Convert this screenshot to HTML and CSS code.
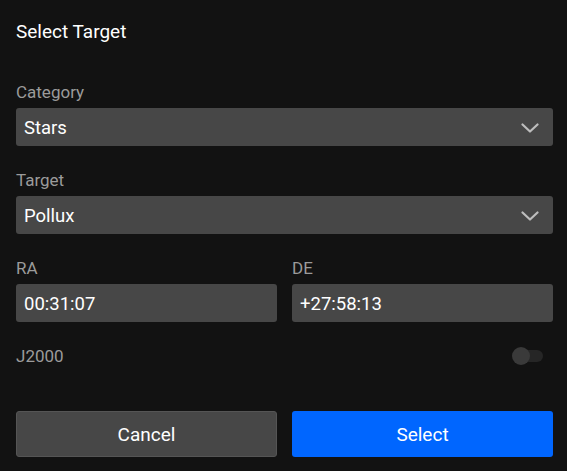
FILE: index.html
```html
<!DOCTYPE html>
<html>
<head>
<meta charset="utf-8">
<link rel="stylesheet" href="styles.css">
</head>
<body>
<div class="dialog">
  <div class="title">Select Target</div>
  <div class="field">
    <div class="label">Category</div>
    <div class="select"><span>Stars</span>
      <svg class="chev" width="18" height="10" viewBox="0 0 18 10"><path d="M1.5 1.5 L9 8.5 L16.5 1.5" fill="none" stroke="#bdbdbd" stroke-width="2.2" stroke-linecap="round" stroke-linejoin="round"/></svg>
    </div>
  </div>
  <div class="field">
    <div class="label">Target</div>
    <div class="select"><span>Pollux</span>
      <svg class="chev" width="18" height="10" viewBox="0 0 18 10"><path d="M1.5 1.5 L9 8.5 L16.5 1.5" fill="none" stroke="#bdbdbd" stroke-width="2.2" stroke-linecap="round" stroke-linejoin="round"/></svg>
    </div>
  </div>
  <div class="row2">
    <div class="field">
      <div class="label">RA</div>
      <div class="input">00:31:07</div>
    </div>
    <div class="field">
      <div class="label">DE</div>
      <div class="input">+27:58:13</div>
    </div>
  </div>
  <div class="toggle-row">
    <div class="label">J2000</div>
    <div class="toggle"><div class="knob"></div></div>
  </div>
  <div class="buttons">
    <div class="btn cancel">Cancel</div>
    <div class="btn primary">Select</div>
  </div>
</div>
</body>
</html>
```
FILE: styles.css
```css
html, body {
  margin: 0;
  padding: 0;
  background: #121212;
  font-family: Roboto, "Liberation Sans", sans-serif;
  color: #ffffff;
}
.dialog {
  width: 567px;
  height: 471px;
  box-sizing: border-box;
  padding: 20px 14px 0 16px;
  display: flex;
  flex-direction: column;
}
.title {
  font-size: 19px;
  line-height: 24px;
  height: 24px;
  margin-bottom: 36px;
}
.field {
  display: flex;
  flex-direction: column;
  margin-bottom: 22px;
}
.label {
  font-size: 17px;
  line-height: 24px;
  color: #9b9b9b;
  margin-bottom: 4px;
}
.select, .input {
  height: 38px;
  border-radius: 3px;
  background: #474747;
  display: flex;
  align-items: center;
  justify-content: space-between;
  padding: 1px 14px 0 8px;
  box-sizing: border-box;
  font-size: 18.5px;
  color: #ffffff;
}
.chev {
  display: block;
}
.row2 {
  display: grid;
  grid-template-columns: 1fr 1fr;
  column-gap: 15px;
}
.row2 .field {
  margin-bottom: 22px;
}
.toggle-row {
  display: flex;
  align-items: center;
  justify-content: space-between;
  height: 24px;
  padding-right: 10px;
}
.toggle-row .label {
  margin-bottom: 0;
}
.toggle {
  width: 30px;
  height: 12px;
  border-radius: 6px;
  background: #262626;
  position: relative;
}
.knob {
  position: absolute;
  left: -1px;
  top: -3px;
  width: 18px;
  height: 18px;
  border-radius: 50%;
  background: #3a3a3a;
}
.buttons {
  margin-top: 43px;
  display: grid;
  grid-template-columns: 1fr 1fr;
  column-gap: 15px;
}
.btn {
  height: 46px;
  border-radius: 3px;
  display: flex;
  align-items: center;
  justify-content: center;
  font-size: 19px;
  box-sizing: border-box;
}
.cancel {
  background: #474747;
  border: 1px solid #555555;
}
.primary {
  background: #0066ff;
}
```
